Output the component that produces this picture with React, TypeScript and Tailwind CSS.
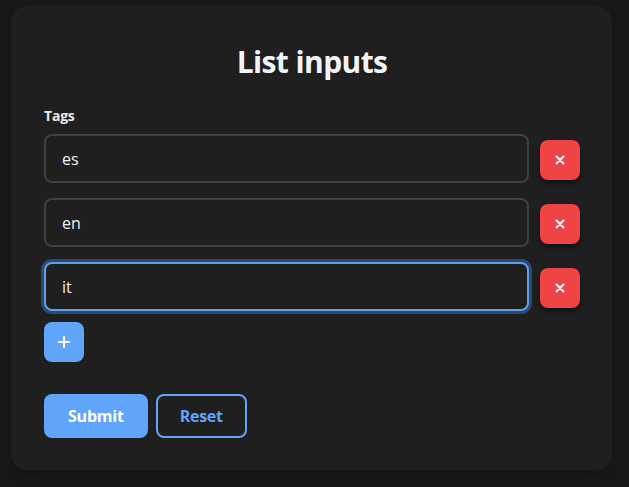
import { useState } from 'react';

export default function App() {
  const [tags, setTags] = useState<string[]>(['es', 'en', 'it']);

  const actualizar = (idx: number, valor: string) => {
    const next = [...tags];
    next[idx] = valor;
    setTags(next);
  };

  const eliminar = (idx: number) => {
    const next = [...tags];
    next.splice(idx, 1);
    setTags(next);
  };

  return (
    <div className="min-h-screen bg-[#181818] pt-[6px] pl-[11px]" style={{ fontFamily: '"Open Sans", "Noto Sans", sans-serif' }}>
      <div className="w-[601px] rounded-2xl bg-[#1f1f1f] pl-[33px] pr-8 pt-[38px] pb-8 shadow-lg">
        <h1 className="text-center text-[30px] leading-9 font-bold text-[#f2f4f8] tracking-[-0.6px]">List inputs</h1>

        <label className="mt-[26px] mb-2 block text-sm leading-5 font-bold text-[#e8e8e8] tracking-[-0.2px]">Tags</label>

        <div className="flex flex-col gap-[15px]">
          {tags.map((t, idx) => {
            const focused = idx === tags.length - 1;
            return (
              <div key={idx} className="flex items-center gap-[11px]">
                <input
                  type="text"
                  value={t}
                  autoFocus={focused}
                  onChange={e => actualizar(idx, e.target.value)}
                  className={`h-[49px] flex-1 rounded-lg border-2 bg-[#1f1f1f] px-4 text-base text-[#f0f0f0] caret-white outline-none ${
                    focused ? 'border-[#5f9fea] ring-[3px] ring-[#2a4a73]' : 'border-[#3b404b]'
                  }`}
                />
                <button
                  onClick={() => eliminar(idx)}
                  className="mt-[2px] flex h-10 w-10 items-center justify-center rounded-lg bg-[#ef4444] text-white shadow-md shadow-black/40"
                >
                  <svg width="10" height="10" viewBox="0 0 10 10">
                    <path d="M1.5 1.5 L8.5 8.5 M8.5 1.5 L1.5 8.5" stroke="white" strokeWidth="2" strokeLinecap="round" />
                  </svg>
                </button>
              </div>
            );
          })}
        </div>

        <button
          onClick={() => setTags([...tags, ''])}
          className="mt-[11px] flex h-10 w-10 items-center justify-center rounded-lg bg-[#60a5fa] text-white"
        >
          <svg width="12" height="12" viewBox="0 0 12 12">
            <path d="M6 1 V11 M1 6 H11" stroke="white" strokeWidth="2" strokeLinecap="round" />
          </svg>
        </button>

        <div className="mt-8 flex gap-2">
          <button className="h-11 rounded-lg bg-[#60a5fa] px-6 text-base font-bold text-white tracking-[-0.2px]">Submit</button>
          <button className="h-11 rounded-lg border-2 border-[#60a5fa] px-[22px] text-base font-bold text-[#60a5fa] tracking-[-0.3px]">Reset</button>
        </div>
      </div>
    </div>
  );
}
